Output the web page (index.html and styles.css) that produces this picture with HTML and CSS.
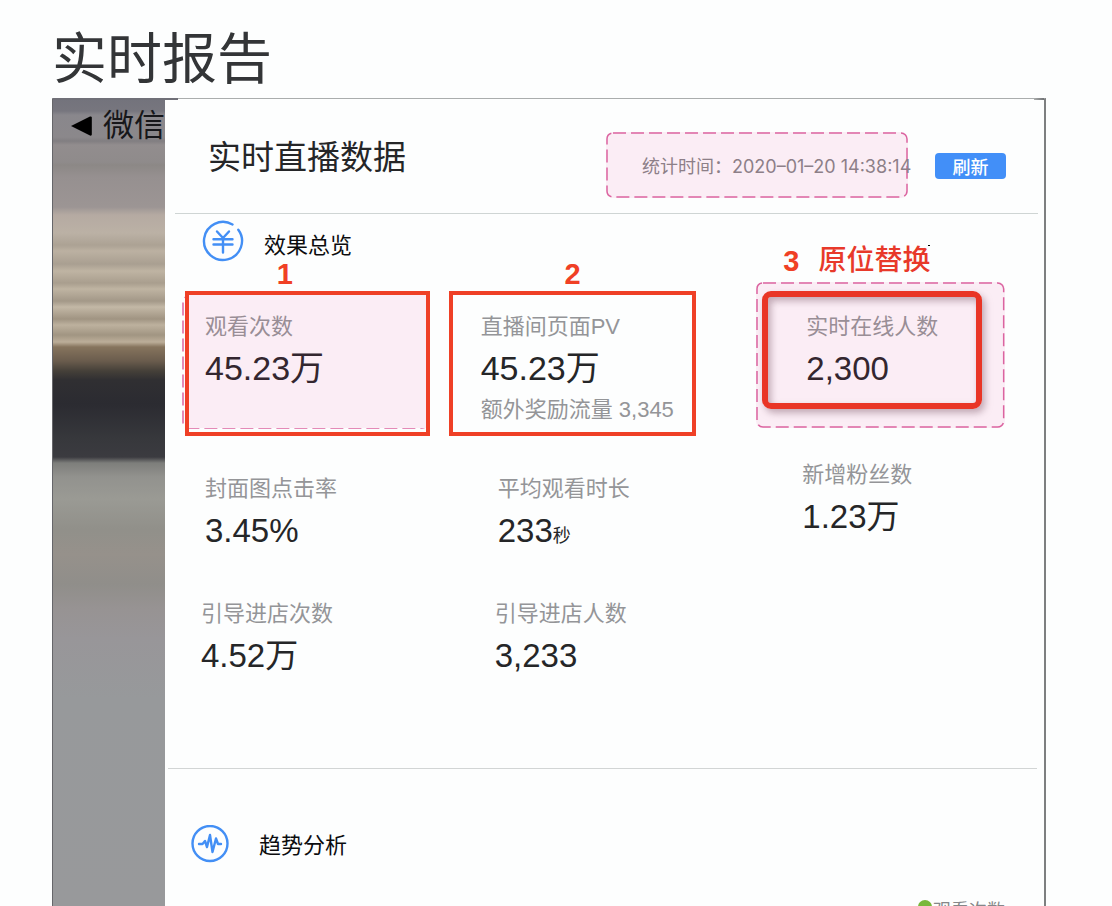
FILE: index.html
```html
<!DOCTYPE html>
<html lang="zh-CN">
<head>
<meta charset="utf-8">
<title>实时报告</title>
<link rel="stylesheet" href="styles.css">
</head>
<body>
<h1 class="page-title">实时报告</h1>
<main class="frame">
  <aside class="backdrop">
    <a class="back" href="#">
      <svg class="back-arrow" viewBox="0 0 21 20" aria-hidden="true"><path d="M0 10 19 0.500q1.800-.4 1.800 1v17q0 1.500-1.800 1z"/></svg>
      <span>微信</span>
    </a>
  </aside>
  <div class="panel">
    <header class="panel-head">
      <h2 class="panel-title">实时直播数据</h2>
      <div class="stamp">
        <svg class="dashes" aria-hidden="true"><rect x="1" y="1" rx="6"/></svg>
        <span class="stamp-text">统计时间：<time>2020–01–20 14:38:14</time></span>
      </div>
      <button class="refresh" type="button">刷新</button>
    </header>

    <section class="overview">
      <div class="section-head">
        <svg class="icon-yen" viewBox="0 0 42 42" aria-hidden="true"><path d="M30.500 4.500A19 19 0 1 0 36.300 9.700"/><path d="M15 11.500 21 18l6-6.500M11.500 19.200h19M11.500 24.500h19M21 18.500v14"/></svg>
        <h3 class="section-title">效果总览</h3>
      </div>
      <div class="metrics">
        <div class="metric boxed pink">
          <svg class="dashes" aria-hidden="true"><rect x="1" y="1" rx="6"/></svg>
          <span class="mark">1</span>
          <span class="label">观看次数</span>
          <span class="value">45.23万</span>
        </div>
        <div class="metric boxed wide">
          <span class="mark">2</span>
          <span class="label">直播间页面PV</span>
          <span class="value">45.23万</span>
          <span class="label">额外奖励流量 3,345</span>
        </div>
        <div class="metric online">
          <svg class="dashes" aria-hidden="true"><rect x="1" y="1" rx="6"/></svg>
          <span class="outline"></span>
          <span class="mark note"><b>3</b><span class="note-text">原位替换</span></span>
          <span class="label">实时在线人数</span>
          <span class="value">2,300</span>
        </div>
        <div class="metric second">
          <span class="label">封面图点击率</span>
          <span class="value">3.45%</span>
        </div>
        <div class="metric second middle">
          <span class="label">平均观看时长</span>
          <span class="value">233<small class="unit">秒</small></span>
        </div>
        <div class="metric fans">
          <span class="label">新增粉丝数</span>
          <span class="value">1.23万</span>
        </div>
        <div class="metric third">
          <span class="label">引导进店次数</span>
          <span class="value">4.52万</span>
        </div>
        <div class="metric third middle">
          <span class="label">引导进店人数</span>
          <span class="value">3,233</span>
        </div>
      </div>
    </section>

    <section class="trend">
      <div class="section-head">
        <svg class="icon-pulse" viewBox="0 0 38 38" aria-hidden="true"><circle cx="19" cy="18.500" r="17.500"/><path d="M8 19h3.500l2.500-3 2 6 3-12 2.500 17 3.500-13.500 2 5.500h3"/></svg>
        <h3 class="section-title">趋势分析</h3>
      </div>
      <div class="legend"><i class="dot"></i>观看次数</div>
    </section>
  </div>
</main>
</body>
</html>
```

FILE: styles.css
```css
* {
  box-sizing: border-box;
}

body {
  display: flex;
  flex-direction: column;
  height: 100vh;
  margin: 0;
  padding: 18px 66px 0 52px;
  overflow: hidden;
  background: #fdfefe;
  color: #252628;
  font-family: "Liberation Sans", "Noto Sans CJK SC", sans-serif;
}

h1, h2, h3 {
  margin: 0;
  font-weight: 400;
}

.page-title {
  flex: none;
  height: 80px;
  color: #333537;
  font-size: 55px;
  line-height: 82px;
}

.frame {
  position: relative;
  display: flex;
  flex: 1;
  min-height: 0;
  border: 1px solid #66666a;
  border-top-color: #aaadad;
  border-right: 2px solid #7d7f80;
  border-bottom: 0;
}

.frame::before,
.frame::after {
  content: "";
  position: absolute;
  top: -1px;
  height: 2px;
}

.frame::before {
  left: 0;
  width: 125px;
  background: #707078;
}

.frame::after {
  right: 0;
  width: 10px;
  background: linear-gradient(90deg, #aaadad, #707274);
}

.backdrop {
  flex: none;
  width: 112px;
  overflow: hidden;
  background: linear-gradient(#73737c 0, #77767e 12px, #89878c 16px, #8b888b 38px, #817e81 42px, #928d8e 46px, #8f8b8b 63px, #8c8886 66px, #969090 78px, #9c9594 108px, #b5aaa2 116px, #bbb1a5 134px, #aca294 146px, #b0a698 148px, #bcb1a2 152px, #a99f91 165px, #bfb4a3 172px, #a99e8e 184px, #bfb4a2 190px, #a39888 202px, #c3b8a6 208px, #a09482 220px, #bdb19e 226px, #a19582 236px, #bcae99 243px, #86745d 248px, #6a5c4d 262px, #454039 272px, #302f32 281px, #2b2b31 305px, #37383c 340px, #3b3b40 358px, #7d7e7b 364px, #92928e 378px, #9a9a94 400px, #91908a 430px, #96918b 455px, #908e8a 485px, #979393 510px, #989699 540px, #97999b 600px, #98999b 100%);
}

.back {
  display: flex;
  align-items: center;
  gap: 11px;
  padding: 5px 0 0 18px;
  color: #17171a;
  font-size: 31px;
  line-height: 44px;
  text-decoration: none;
  white-space: nowrap;
}

.back-arrow {
  flex: none;
  width: 21px;
  height: 20px;
  fill: #000;
}

.panel {
  flex: 1;
  min-width: 0;
}

.panel-head {
  display: flex;
  align-items: flex-start;
  height: 115px;
  margin: 0 6px 0 10px;
  padding: 33px 32px 0 33px;
  border-bottom: 1px solid #cfd5d4;
}

.panel-title {
  margin-right: auto;
  font-size: 33px;
  line-height: 52px;
}

.stamp {
  position: relative;
  width: 302px;
  height: 66px;
  margin-right: 27px;
  padding-left: 36px;
  background: #fbedf5;
  border-radius: 7px;
  color: #8d7f88;
  font-size: 18px;
  line-height: 70px;
  white-space: nowrap;
}

.stamp-text {
  position: relative;
}

.stamp time {
  font-family: Inter, sans-serif;
}

.dashes {
  position: absolute;
  top: 0;
  left: 0;
  width: 100%;
  height: 100%;
  overflow: visible;
}

.dashes rect {
  width: calc(100% - 2px);
  height: calc(100% - 2px);
  fill: none;
  stroke: #db64a0;
  stroke-width: 1.500px;
  stroke-dasharray: 13 5;
}

.refresh {
  width: 71px;
  height: 26px;
  margin-top: 21px;
  padding: 0;
  border: 0;
  border-radius: 4px;
  background: #428ff8;
  color: #fff;
  font: 500 18px/26px "Noto Sans CJK SC", sans-serif;
}

.overview {
  height: 555px;
  margin: 0 7px 0 3px;
  padding-top: 5px;
  border-bottom: 1px solid #d2d5d5;
}

.section-head {
  display: flex;
  align-items: center;
}

.section-title {
  padding-top: 4px;
  color: #0c0c0e;
  font-size: 22px;
  line-height: 32px;
}

.overview .section-head {
  gap: 20px;
  height: 44px;
  margin-left: 34px;
}

.overview .section-title {
  padding-top: 9px;
}

.icon-yen,
.icon-pulse {
  flex: none;
  width: 42px;
  height: 42px;
  fill: none;
  stroke: #438ff5;
  stroke-width: 2.400;
  stroke-linecap: round;
  stroke-linejoin: round;
}

.metrics {
  display: grid;
  grid-template-columns: 264fr 308fr 281fr;
  grid-template-rows: 173px 129px auto;
  margin-left: 17px;
  padding-top: 28px;
}

.metric {
  position: relative;
  display: flex;
  flex-direction: column;
  white-space: nowrap;
}

.label {
  position: relative;
  color: #949598;
  font-size: 22px;
  line-height: 42px;
}

.value {
  position: relative;
  font-size: 33px;
  line-height: 41px;
}

.unit {
  font-size: 18px;
}

.boxed {
  height: 145px;
  margin-right: 19px;
  padding: 11px 16px 0;
  border: 4px solid #ef4026;
}

.boxed .value {
  font-size: 34px;
}

.boxed.wide {
  margin-right: 60px;
  padding-left: 28px;
}

.pink {
  background: linear-gradient(#fbedf5, #fbedf5) no-repeat 0 0 / 100% 133px;
}

.pink .dashes {
  left: -7px;
  width: 247px;
  height: 134px;
  z-index: -1;
}

.pink .label,
.online .label {
  color: #998e96;
}

.pink .value,
.online .value {
  color: #33262f;
}

.mark {
  position: absolute;
  top: -38px;
  left: 0;
  width: 100%;
  padding-right: 45px;
  color: #f04025;
  font-size: 29px;
  font-weight: 700;
  line-height: 34px;
  text-align: center;
}

.wide .mark {
  padding-right: 0;
}

.online {
  height: 146px;
  margin: -9px 32px 0 0;
  padding: 24px 0 0 50px;
  background: #fbedf5;
  border-radius: 7px;
}

.outline {
  position: absolute;
  top: 9px;
  right: 23px;
  left: 6px;
  height: 118px;
  border: 6px solid #e93526;
  border-radius: 9px;
  box-shadow: 3px 4px 7px #9b7b8b99, inset 3px 4px 7px #9b7b8b99;
}

.note {
  left: 27px;
  display: flex;
  gap: 19px;
  width: auto;
  padding: 0;
}

.note-text {
  color: #e8392a;
  font-weight: 500;
  font-size: 28px;
}

.note-text::after {
  content: "";
  position: absolute;
  top: 1px;
  right: 0;
  width: 2px;
  height: 1px;
  background: #000;
}

.second {
  padding: 4px 0 0 20px;
}

.third {
  padding-left: 16px;
}

.second.middle {
  padding-left: 49px;
}

.third.middle {
  padding-left: 46px;
}

.fans {
  margin-top: -10px;
  padding-left: 46px;
}

.trend {
  padding: 56px 39px 0 26px;
}

.trend .section-head {
  gap: 30px;
}

.icon-pulse {
  width: 38px;
  height: 38px;
}

.legend {
  display: flex;
  align-items: center;
  justify-content: flex-end;
  gap: 1px;
  margin-top: 35px;
  color: #858789;
  font-size: 18px;
  line-height: 26px;
}

.dot {
  width: 14px;
  height: 14px;
  margin-bottom: 8px;
  border-radius: 50%;
  background: #78b83a;
}
```
